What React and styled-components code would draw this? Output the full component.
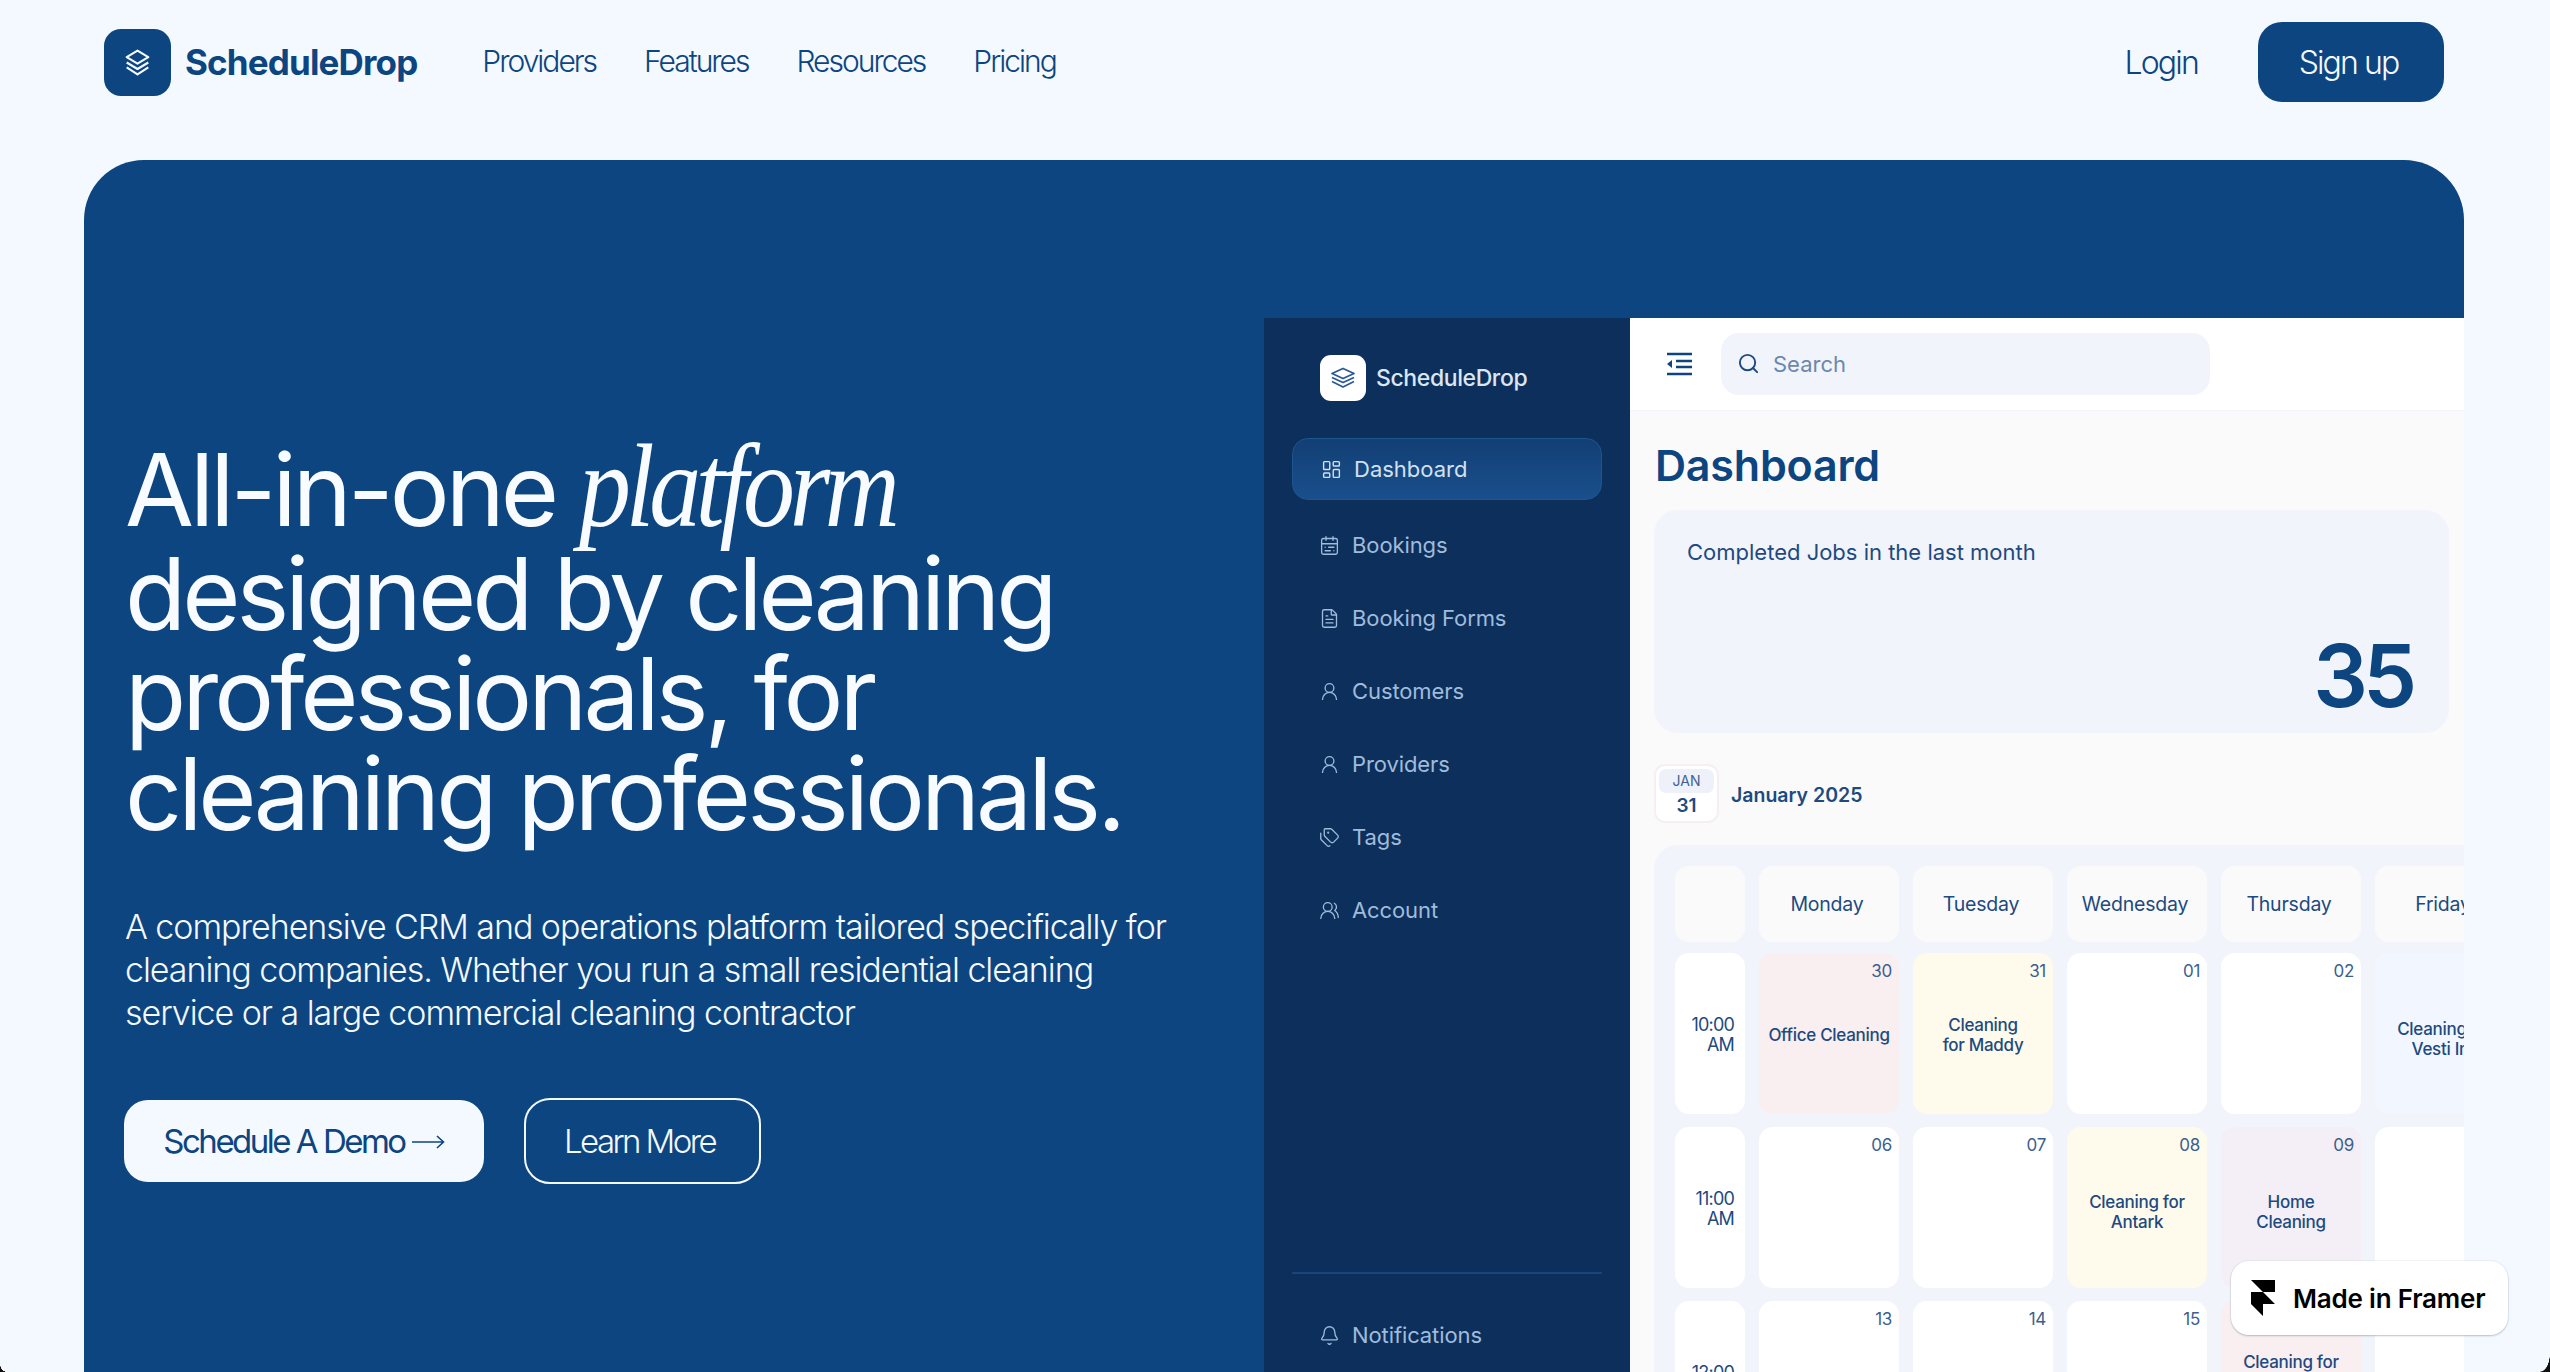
import React from 'react';
import styled, { createGlobalStyle, css } from 'styled-components';
import { LayoutDashboard, CalendarRange, FileText, UserRound, Tags, UsersRound, Bell, Search as SearchIcon } from 'lucide-react';

const Global = createGlobalStyle`
  html, body { margin: 0; height: 100%; overflow: hidden; background: #f4f9ff; }
  #root { height: 100%; overflow: hidden; }
  * { box-sizing: border-box; }
  body { font-family: Inter, "Liberation Sans", sans-serif; }
`;

const navy = '#0d4581';
const Page = styled.div`height: 1372px; overflow: hidden; position: relative; background: #f4f9ff;`;

const Header = styled.header`
  display: flex; align-items: center; justify-content: space-between;
  height: 160px; padding: 22px 106px 58px 104px;
`;
const HeaderLeft = styled.div`display: flex; align-items: center;`;
const Brand = styled.div`display: flex; align-items: center; gap: 14px; margin-right: 65px;`;
const BrandTile = styled.div`
  width: 67px; height: 67px; border-radius: 17px; background: ${navy};
  display: flex; align-items: center; justify-content: center;
`;
const BrandName = styled.span`font-size: 35px; font-weight: 700; color: ${navy}; letter-spacing: -0.85px;`;
const NavLinks = styled.nav`display: flex; gap: 48px; margin-top: -2px;`;
const NavLink = styled.a`font-size: 30px; font-weight: 300; color: ${navy}; letter-spacing: -2px;`;
const HeaderRight = styled.div`display: flex; align-items: center; gap: 60px;`;
const Login = styled.a`font-size: 32px; font-weight: 300; color: ${navy}; letter-spacing: -1.8px;`;
const SignUp = styled.a`
  width: 186px; height: 80px; border-radius: 24px; background: ${navy}; color: #f4f9ff;
  display: flex; align-items: center; justify-content: center; padding-right: 5px;
  font-size: 32px; font-weight: 300; letter-spacing: -1.9px;
`;

const Hero = styled.section`
  margin: 0 86px 0 84px; height: 1300px; background: ${navy}; border-radius: 60px 60px 0 0;
  display: flex; justify-content: space-between; align-items: flex-start; padding-top: 158px; overflow: hidden;
`;
const HeroCopy = styled.div`width: 1150px; padding: 119px 0 0 41px; flex: none;`;
const Title = styled.h1`
  margin: 0; font-size: 100px; line-height: 100px; font-weight: 400; color: #f8fbff; letter-spacing: -4px;
`;
const TitleFirstLine = styled.span`display: block; margin-bottom: 4px;`;
const TitleAccent = styled.em`
  display: inline-block; transform: scaleX(0.88); transform-origin: left center;
  font-family: "Liberation Serif", serif; font-style: italic; font-size: 118px; letter-spacing: -6px;
`;
const Lead = styled.p`
  margin: 61px 0 0; width: 1060px; font-size: 34px; line-height: 43px; font-weight: 300;
  color: #f4f9ff; letter-spacing: -1.05px;
`;
const Actions = styled.div`display: flex; align-items: center; gap: 40px; margin-top: 64px; margin-left: -1px;`;
const Primary = styled.a`
  width: 360px; height: 82px; border-radius: 24px; background: #f4f9ff; color: ${navy};
  display: flex; align-items: center; justify-content: center; gap: 7px;
  font-size: 33px; font-weight: 400; letter-spacing: -2.5px;
`;
const Secondary = styled.a`
  width: 237px; height: 86px; border-radius: 26px; border: 2px solid #f4f9ff; color: #f4f9ff;
  display: flex; align-items: center; justify-content: center; padding-right: 6px;
  font-size: 33px; font-weight: 300; letter-spacing: -2.6px;
`;

const AppFrame = styled.div`width: 1200px; flex: none; display: flex; overflow: hidden; height: 1095px;`;
const Sidebar = styled.aside`
  width: 366px; flex: none; background: #0c305b; padding: 37px 28px 60px; display: flex; flex-direction: column;
`;
const SideBrand = styled.div`display: flex; align-items: center; gap: 10px; padding-left: 28px; height: 45px; margin-bottom: 38px;`;
const SideTile = styled.div`
  width: 46px; height: 46px; border-radius: 11px; background: #fff;
  display: flex; align-items: center; justify-content: center;
`;
const SideName = styled.span`font-size: 23px; font-weight: 500; color: #dbe6f3; letter-spacing: -0.4px;`;
const SideList = styled.div`display: flex; flex-direction: column; gap: 37px;`;
const ActiveItem = styled.div`
  height: 62px; border-radius: 16px; background: linear-gradient(180deg, #123f74, #1a4f8c); border: 1.5px solid #1d558f;
  display: flex; align-items: center; gap: 12px; padding-left: 28px; margin-bottom: -10px;
  color: #d3e0ef; font-size: 22px; font-weight: 400;
`;
const SideItem = styled.div`
  height: 36px; display: flex; align-items: center; gap: 12px; padding-left: 27px;
  color: #a0bbdb; font-size: 22px; font-weight: 400; letter-spacing: -0.1px;
`;
const SideFooter = styled.div`margin-top: auto; border-top: 2px solid #14467f; padding-top: 43px;`;

const Main = styled.main`flex: 1; min-width: 0; background: #fafafa; display: flex; flex-direction: column;`;
const TopBar = styled.div`
  height: 93px; flex: none; background: #fff; border-bottom: 1px solid #f1f4fa;
  display: flex; align-items: center; gap: 29px; padding-left: 36px;
`;
const SearchBox = styled.div`
  width: 489px; height: 62px; border-radius: 18px; background: #f1f4fb;
  display: flex; align-items: center; gap: 13px; padding-left: 16px; margin-top: -1px;
  color: #6d87ab; font-size: 22px; font-weight: 400;
`;
const Content = styled.div`padding: 24px 0 0 24px; display: flex; flex-direction: column;`;
const PageTitle = styled.h2`margin: 0 0 15px 1px; font-size: 43px; line-height: 60px; font-weight: 600; color: ${navy}; letter-spacing: -0.2px;`;
const StatCard = styled.div`
  width: 795px; height: 223px; border-radius: 24px; background: #f1f4fb; padding: 27px 37px 14px 33px;
  display: flex; flex-direction: column; justify-content: space-between;
`;
const StatLabel = styled.div`font-size: 22px; line-height: 30px; font-weight: 400; color: #1d4a80;`;
const StatValue = styled.div`font-size: 86px; line-height: 86px; font-weight: 600; color: ${navy}; text-align: right; letter-spacing: -5px;`;
const MonthRow = styled.div`display: flex; align-items: center; gap: 12px; margin-top: 31px; height: 59px;`;
const DateBadge = styled.div`
  width: 65px; height: 59px; border-radius: 11px; border: 2px solid #f5eff4; background: #fff; padding: 3px;
  display: flex; flex-direction: column; align-items: center;
`;
const BadgeMonth = styled.div`
  width: 100%; height: 24px; border-radius: 7px; background: #eef1f9; color: #3e6191;
  font-size: 14px; line-height: 24px; text-align: center;
`;
const BadgeDay = styled.div`font-size: 19px; line-height: 26px; font-weight: 600; color: #1d4a80;`;
const MonthName = styled.div`font-size: 19.5px; font-weight: 600; color: #1d4a80; margin-top: 2px;`;
const Calendar = styled.div`
  margin-top: 22px; width: 880px; border-radius: 24px 0 0 0; background: #f1f4fb; padding: 21px 0 0 21px;
  display: flex; flex-direction: column; gap: 11px;
`;
const weekColumns = css`display: grid; grid-template-columns: 70px repeat(5, 140px); column-gap: 14px;`;
const CalendarHead = styled.div`${weekColumns} grid-template-rows: 76px;`;
const CalendarBody = styled.div`${weekColumns} grid-auto-rows: 161px; row-gap: 13px;`;
const HeadCell = styled.div`
  background: #fafafa; border-radius: 14px; display: flex; align-items: center; justify-content: center; padding-right: 4px;
  font-size: 19.5px; font-weight: 400; color: #1d4a80; letter-spacing: -0.2px;
`;
const TimeCell = styled.div`
  background: #fff; border-radius: 14px; display: flex; align-items: center; justify-content: flex-end;
  text-align: right; padding: 3px 11px 0 0; font-size: 18px; line-height: 20px; color: #1d4a80; letter-spacing: -0.8px;
  white-space: pre-line;
`;
const Cell = styled.div`
  background: ${(p) => p.$bg || '#fff'}; border-radius: 14px; padding: 6px 7px 7px;
  display: grid; grid-template-columns: 1fr; grid-template-rows: 1fr;
`;
const CellDate = styled.div`
  grid-area: 1 / 1; place-self: start end; font-size: 17px; line-height: 24px; color: #3b5f90; letter-spacing: -0.3px;
`;
const CellLabel = styled.div`
  grid-area: 1 / 1; place-self: center; text-align: center; font-size: 17px; line-height: 20px; font-weight: 500;
  color: #1d4a80; letter-spacing: -0.3px; white-space: pre-line; margin-bottom: ${(p) => p.$lift || 0}px;
`;

const Badge = styled.div`
  position: absolute; left: 2231px; top: 1261px; width: 277px; height: 74px; border-radius: 18px; background: #fff;
  box-shadow: 0 1px 2px rgba(20,40,80,.25), 0 0 0 1px rgba(20,40,80,.04);
  display: flex; align-items: center; gap: 18px; padding-left: 20px;
  font-size: 26px; font-weight: 600; color: #000; letter-spacing: -0.2px;
`;
const CornerLeft = styled.div`
  position: absolute; left: 0; bottom: 0; width: 7px; height: 8px;
  background: radial-gradient(ellipse 7px 8px at 100% 0, transparent 96%, #111 100%);
`;
const CornerRight = styled.div`
  position: absolute; right: 0; bottom: 0; width: 10px; height: 18px;
  background: radial-gradient(ellipse 10px 18px at 0 0, transparent 96%, #111 100%);
`;

const LogoHeader = () => (
  <svg width="31" height="27" viewBox="0 0 28 25" fill="none" stroke="#f4f9ff" strokeWidth="2" strokeLinejoin="round">
    <path d="M14 1.5 24 7.5 14 13.5 4 7.5Z" />
    <path d="M4 12.5 14 18.5 24 12.5" />
    <path d="M4 17 14 23.5 24 17" />
  </svg>
);
const LogoSide = () => (
  <svg width="26" height="22" viewBox="0 0 26 22" fill="none" stroke="#2a5a94" strokeWidth="1.8" strokeLinejoin="round">
    <path d="M13 1.5 24 6.5 13 11.5 2 6.5Z" />
    <path d="M2 10.5 13 15.5 24 10.5" />
    <path d="M2 14.5 13 20 24 14.5" />
  </svg>
);
const MenuIcon = () => (
  <svg width="26" height="24" viewBox="0 0 26 24" fill="none" stroke={navy} strokeWidth="2.4">
    <path d="M1 2h25M1 22h25M10 9h16M10 15h16" />
    <path d="M6 8v8l-5-4z" fill={navy} strokeWidth="0" />
  </svg>
);
const ArrowLong = () => (
  <svg width="33" height="16" viewBox="0 0 33 16" fill="none" stroke={navy} strokeWidth="1.6">
    <path d="M0 9h31M25 3l6.5 6-6.5 6" />
  </svg>
);
const FramerMark = () => (
  <svg width="24" height="36" viewBox="0 0 14 21" fill="#000">
    <path d="M0 0h14v7H7zM0 7h7l7 7H7v7l-7-7z" />
  </svg>
);

const sideItems = [
  [CalendarRange, 'Bookings'], [FileText, 'Booking Forms'], [UserRound, 'Customers'],
  [UserRound, 'Providers'], [Tags, 'Tags'], [UsersRound, 'Account'],
];
const days = ['Monday', 'Tuesday', 'Wednesday', 'Thursday', 'Friday'];
const rows = [
  ['10:00\nAM', [['30', 'Office Cleaning', '#f9eef0', -3], ['31', 'Cleaning\nfor Maddy', '#fefbec', -3], ['01'], ['02'], ['', 'Cleaning for\nVesti Inc', '#f2f7ff', -12]]],
  ['11:00\nAM', [['06'], ['07'], ['08', 'Cleaning for\nAntark', '#fefbec', -9], ['09', 'Home\nCleaning', '#f4eff6', -9], ['']]],
  ['12:00\nAM', [['13'], ['14'], ['15'], ['', 'Cleaning for', '#f9eef0', 38], ['']]],
];

export default function App() {
  return (
    <Page>
      <Global />
      <Header>
        <HeaderLeft>
          <Brand>
            <BrandTile><LogoHeader /></BrandTile>
            <BrandName>ScheduleDrop</BrandName>
          </Brand>
          <NavLinks>
            {['Providers', 'Features', 'Resources', 'Pricing'].map((n) => <NavLink key={n}>{n}</NavLink>)}
          </NavLinks>
        </HeaderLeft>
        <HeaderRight>
          <Login>Login</Login>
          <SignUp>Sign up</SignUp>
        </HeaderRight>
      </Header>
      <Hero>
        <HeroCopy>
          <Title><TitleFirstLine>All-in-one <TitleAccent>platform</TitleAccent></TitleFirstLine>designed by cleaning<br />professionals, for<br />cleaning professionals.</Title>
          <Lead>A comprehensive CRM and operations platform tailored specifically for cleaning companies. Whether you run a small residential cleaning service or a large commercial cleaning contractor</Lead>
          <Actions>
            <Primary>Schedule A Demo<ArrowLong /></Primary>
            <Secondary>Learn More</Secondary>
          </Actions>
        </HeroCopy>
        <AppFrame>
          <Sidebar>
            <SideBrand><SideTile><LogoSide /></SideTile><SideName>ScheduleDrop</SideName></SideBrand>
            <SideList>
              <ActiveItem><LayoutDashboard size={21} strokeWidth={1.6} />Dashboard</ActiveItem>
              {sideItems.map(([Icon, label]) => (
                <SideItem key={label}><Icon size={21} strokeWidth={1.5} />{label}</SideItem>
              ))}
            </SideList>
            <SideFooter><SideItem><Bell size={21} strokeWidth={1.5} />Notifications</SideItem></SideFooter>
          </Sidebar>
          <Main>
            <TopBar>
              <MenuIcon />
              <SearchBox><SearchIcon size={23} strokeWidth={2} color="#1d4a80" />Search</SearchBox>
            </TopBar>
            <Content>
              <PageTitle>Dashboard</PageTitle>
              <StatCard>
                <StatLabel>Completed Jobs in the last month</StatLabel>
                <StatValue>35</StatValue>
              </StatCard>
              <MonthRow>
                <DateBadge><BadgeMonth>JAN</BadgeMonth><BadgeDay>31</BadgeDay></DateBadge>
                <MonthName>January 2025</MonthName>
              </MonthRow>
              <Calendar>
                <CalendarHead>
                  <HeadCell />
                  {days.map((d) => <HeadCell key={d}>{d}</HeadCell>)}
                </CalendarHead>
                <CalendarBody>
                  {rows.map(([time, cells]) => (
                    <React.Fragment key={time}>
                      <TimeCell>{time}</TimeCell>
                      {cells.map(([date, label, bg, lift], i) => (
                        <Cell key={i} $bg={bg}>
                          {date && <CellDate>{date}</CellDate>}
                          {label && <CellLabel $lift={lift}>{label}</CellLabel>}
                        </Cell>
                      ))}
                    </React.Fragment>
                  ))}
                </CalendarBody>
              </Calendar>
            </Content>
          </Main>
        </AppFrame>
      </Hero>
      <Badge><FramerMark />Made in Framer</Badge>
      <CornerLeft /><CornerRight />
    </Page>
  );
}
